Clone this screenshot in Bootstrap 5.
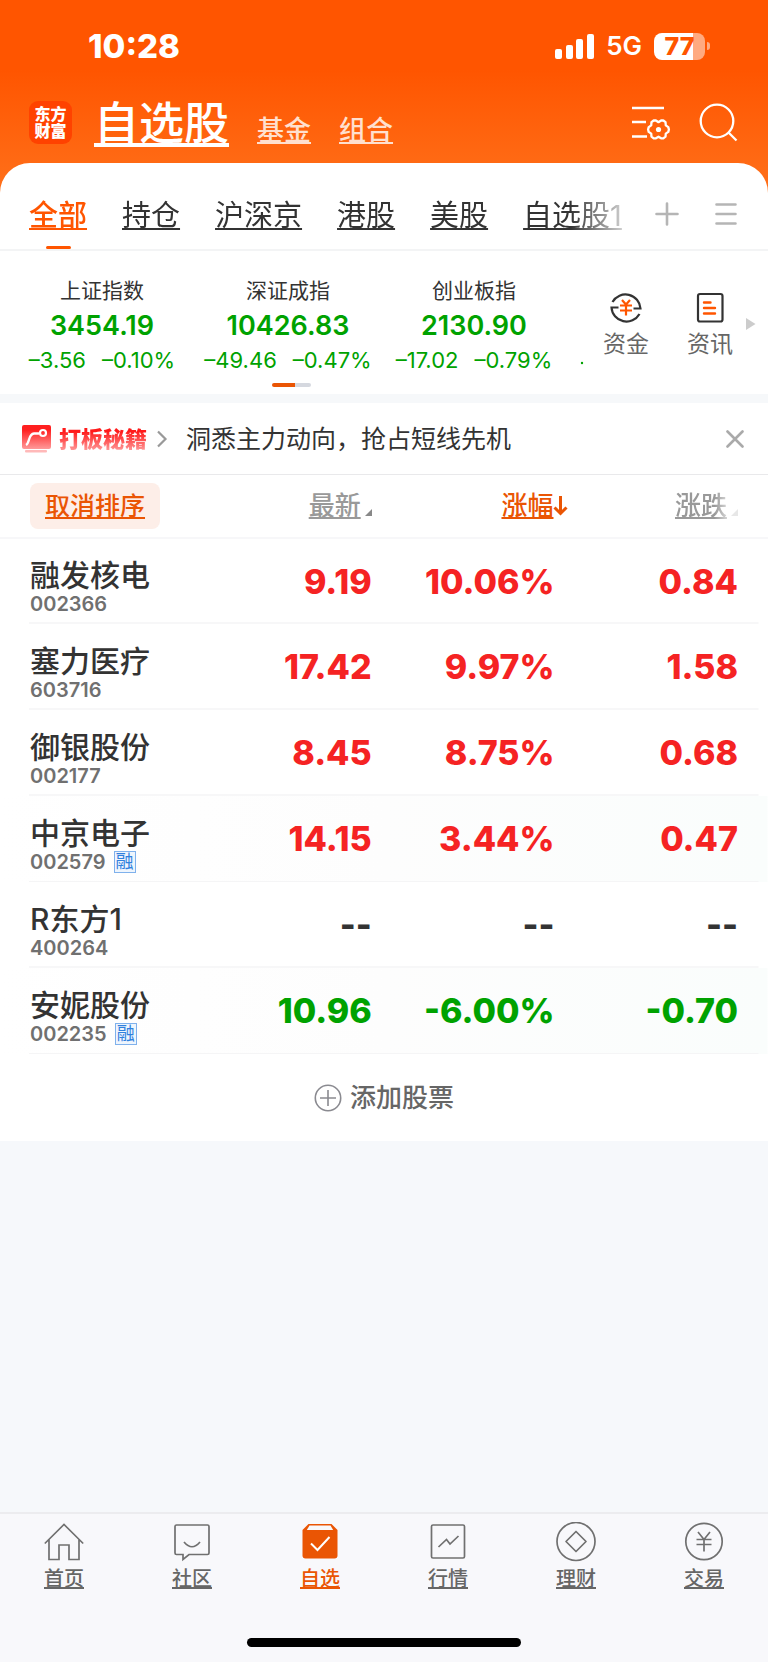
<!DOCTYPE html>
<html lang="zh-CN">
<head>
<meta charset="utf-8">
<meta name="viewport" content="width=device-width, initial-scale=1">
<title>自选股</title>
<link href="https://cdn.jsdelivr.net/npm/bootstrap@5.3.0/dist/css/bootstrap.min.css" rel="stylesheet">
<style>
:root { --brand:#ea5504; --hot:#ff5500; --up:#f52323; --down:#00a200; --ink:#333; --soft:#666; --mute:#999; --line:#f3f4f5; }
body { font-family:Inter,"Noto Sans CJK SC",sans-serif; color:var(--ink); background:#f6f8fb; }
a { color:inherit; }
svg { display:block; flex:none; }
.top-area { background:linear-gradient(#ff5500 0,#ff5500 70px,#ff721c 200px); color:#fff; }
.status-bar { height:90px; padding:2px 58px 0 88px; }
.clock { font-size:33px; line-height:40px; font-weight:800; }
.net { font-size:26px; line-height:32px; font-weight:600; }
.battery { width:51px; height:27px; border-radius:8px; background:linear-gradient(90deg,#fff 77%,#ffffff80 77%); color:var(--hot); font-size:25px; line-height:27px; font-weight:800; text-align:center; margin-left:12px; }
.battery-tip { width:3px; height:8px; border-radius:0 3px 3px 0; background:#ffffff80; margin-left:2px; }
.title-bar { height:73px; padding:0 30px 8px 29px; }
.app-logo { width:43px; height:43px; border-radius:9px; background:#ff4200; font-size:16px; line-height:17px; font-weight:900; text-align:center; padding-top:5px; }
.title-group { margin-left:22px; padding-top:2px; }
.page-title { font-size:45px; line-height:56px; font-weight:500; margin:0; }
.sub-title { font-size:27px; line-height:32px; font-weight:500; color:#ffe0cf; }
.sheet { background:#fff; border-radius:30px 30px 0 0; color:var(--ink); }
.tab-bar { height:88px; padding:0 31px 0 29px; border-bottom:2px solid var(--line); }
.tab-scroll { gap:35px; overflow:hidden; -webkit-mask-image:linear-gradient(90deg,#000 90%,#0003 99%); mask-image:linear-gradient(90deg,#000 90%,#0003 99%); }
.tab-scroll a { font-size:29px; line-height:36px; white-space:nowrap; padding:35px 0 15px; position:relative; }
.tab-scroll .current { color:var(--hot); font-weight:500; }
.tab-scroll .current::after { content:""; position:absolute; left:50%; bottom:0; width:25px; height:3px; margin-left:-12px; border-radius:2px; background:var(--hot); }
.plain { border:0; background:none; padding:0; color:inherit; }
.tab-bar .plain { padding-top:15px; }
.index-strip { height:143px; padding:24px 11px 0 9px; }
.index-cell { flex:0 0 186px; text-align:center; white-space:nowrap; }
.index-name { font-size:21px; line-height:32px; }
.index-value { font-size:27px; line-height:38px; font-weight:600; color:var(--down); }
.index-diff { font-size:22px; line-height:30px; color:var(--down); gap:16px; }
.pager { width:39px; height:4px; border-radius:2px; background:linear-gradient(90deg,var(--brand) 60%,#d5d8df 60%); left:272px; bottom:7px; }
.tool { font-size:23px; line-height:30px; color:var(--soft); }
.tool-gap { width:38px; }
.tool-more { margin-left:12px; }
.promo { height:72px; padding:0 24px 0 21px; border-bottom:1px solid #e9e9eb; }
.gap-band { height:9px; background:#f6f8fa; }
.promo-name { font-size:22px; line-height:30px; font-weight:900; background:linear-gradient(#ff1a1a 25%,#ff9c9c 90%); -webkit-background-clip:text; background-clip:text; color:transparent; }
.promo-text { font-size:25px; line-height:36px; margin-left:18px; }
.quotes { width:100%; table-layout:fixed; border-collapse:collapse; }
.quotes .c-name { width:24.6%; } .quotes .c-mid { width:23.8%; }
.quotes th, .quotes td { padding:0; text-align:right; font-weight:inherit; vertical-align:middle; }
.quotes th:first-child { text-align:left; padding-left:30px; }
.quotes th:last-child, .quotes td:last-child { padding-right:30px; }
.quotes thead th { height:63px; border-bottom:2px solid #f7f7f9; font-size:26px; line-height:36px; color:var(--mute); font-weight:500; white-space:nowrap; }
.quotes thead .sorted { color:var(--brand); }
.quotes thead .sorted .head-link { margin-right:-14px; }
.quotes thead .fading { -webkit-mask-image:linear-gradient(90deg,#000 75%,#0003 83%); mask-image:linear-gradient(90deg,#000 75%,#0003 83%); }
.reset-btn { border:0; border-radius:8px; background:#fdeee8; color:var(--brand); font-size:25px; line-height:32px; font-weight:500; text-decoration:underline; padding:7px 15px; }
.quotes tbody tr { height:86px; background:linear-gradient(#f7f7f8,#f7f7f8) 29px 100%/calc(100% - 38px) 2px no-repeat; }
.quotes tbody tr.tinted { background:linear-gradient(#f5f5f6,#f5f5f6) 29px 100%/calc(100% - 38px) 1px no-repeat,linear-gradient(90deg,#fff,#fdfdfd 50%,#fafdfc); }
.quotes tbody td { font-size:34px; line-height:44px; font-weight:800; }
.quotes tbody th { padding-top:9px; }
.stock { font-size:30px; line-height:36px; font-weight:500; white-space:nowrap; color:var(--ink); }
.code { font-size:20px; line-height:22px; font-weight:600; color:#707070; gap:8px; }
.flag { width:22px; height:22px; border:1px solid #7fb1ec; background:#eef5fd; color:#2f80dd; font-size:18px; line-height:20px; font-weight:400; text-align:center; }
.up { color:var(--up); } .down { color:var(--down); }
.add-row { height:87px; font-size:26px; line-height:36px; font-weight:500; color:var(--soft); }
.dock { background:#f8f8fb; border-top:2px solid #ececef; color:var(--soft); height:150px; }
.dock nav { padding-top:8px; }
.dock a { flex:1 1 0; font-size:20px; line-height:26px; font-weight:500; }
.dock .current { color:var(--brand); }
.home-bar { width:274px; height:9px; border-radius:5px; background:#000; margin:0 auto 15px; }
</style>
</head>
<body>
<div class="d-flex flex-column min-vh-100">
  <header class="top-area">
    <div class="status-bar d-flex align-items-center justify-content-between">
      <span class="clock">10:28</span>
      <div class="d-flex align-items-center">
        <svg width="39" height="25" viewBox="0 0 39 25" fill="#fff"><rect x="0" y="15" width="7" height="10" rx="2"/><rect x="11" y="11" width="7" height="14" rx="2"/><rect x="21" y="5" width="7" height="20" rx="2"/><rect x="32" y="0" width="7" height="25" rx="2"/></svg>
        <span class="net ms-2 ps-1">5G</span>
        <span class="battery">77</span>
        <span class="battery-tip"></span>
      </div>
    </div>
    <div class="title-bar d-flex align-items-center">
      <div class="app-logo">东方<br>财富</div>
      <div class="title-group d-flex align-items-baseline">
        <h1 class="page-title"><a href="#">自选股</a></h1>
        <a class="sub-title ms-4 ps-1" href="#">基金</a>
        <a class="sub-title ms-4 ps-1" href="#">组合</a>
      </div>
      <button class="plain ms-auto" aria-label="设置列表">
        <svg width="40" height="36" viewBox="0 0 40 36" fill="none" stroke="#fff" stroke-width="2.6"><path d="M1 3h32M1 17h14M1 31.500h15"/><path stroke-width="2.300" stroke-linejoin="round" d="M22.700 15.500h2.200l2.600 1.700 2.600-1.700h2.200l2.200 1.700.3 3.200 2.500 1.700.6 2.400-.6 2.400-2.500 1.700-.3 3-2.200 1.700h-2.200l-2.600-1.600-2.600 1.600h-2.200l-2.200-1.700-.3-3-2.500-1.700-.6-2.400.6-2.400 2.500-1.700.3-3.200z"/><circle cx="27.500" cy="24.500" r="2.600" fill="#fff" stroke="none"/></svg>
      </button>
      <button class="plain ms-4 ps-1" aria-label="搜索">
        <svg width="39" height="39" viewBox="0 0 39 39" fill="none" stroke="#fff" stroke-width="2.300"><circle cx="18" cy="18" r="16.300"/><path d="M29.500 29.500l8 8"/></svg>
      </button>
    </div>
    <div class="sheet">
      <div class="tab-bar d-flex align-items-center">
        <nav class="tab-scroll d-flex flex-fill">
          <a class="current" href="#">全部</a><a href="#">持仓</a><a href="#">沪深京</a><a href="#">港股</a><a href="#">美股</a><a href="#">自选股1</a>
        </nav>
        <button class="plain ms-4" aria-label="添加分组"><svg width="24" height="24" viewBox="0 0 24 24" stroke="#b5b5b5" stroke-width="2.600" stroke-linecap="round"><path d="M12 1.500v21M1.500 12h21"/></svg></button>
        <button class="plain ms-4 ps-2" aria-label="分组列表"><svg class="ms-1" width="22" height="24" viewBox="0 0 22 24" stroke="#b5b5b5" stroke-width="2.600" stroke-linecap="round"><path d="M1.500 2.500h19M1.500 12h19M1.500 21.500h19"/></svg></button>
      </div>
    </div>
  </header>

  <main class="bg-white">
    <section class="index-strip d-flex position-relative">
      <div class="index-cell"><div class="index-name">上证指数</div><div class="index-value">3454.19</div><div class="index-diff d-flex justify-content-center"><span>–3.56</span><span>–0.10%</span></div></div>
      <div class="index-cell"><div class="index-name">深证成指</div><div class="index-value">10426.83</div><div class="index-diff d-flex justify-content-center"><span>–49.46</span><span>–0.47%</span></div></div>
      <div class="index-cell"><div class="index-name">创业板指</div><div class="index-value">2130.90</div><div class="index-diff d-flex justify-content-center"><span>–17.02</span><span>–0.79%</span></div></div>
      <svg class="mt-auto mb-4" width="20" height="14" viewBox="0 0 20 14"><circle cx="15" cy="7" r="1.200" fill="#00a200"/></svg>
      <div class="d-flex flex-fill align-items-start justify-content-end pt-3">
        <a class="tool d-flex flex-column align-items-center text-decoration-none" href="#">
          <svg width="34" height="34" viewBox="0 0 34 34" fill="none" stroke="#333" stroke-width="2.200"><path d="M3.500 11A15 15 0 0 1 31.500 17.500h-7M30.500 23A15 15 0 0 1 2.500 16.500h7"/><path stroke="#ff5500" d="M13 9l4 4.500L21 9M11 14.500h12M11 19.500h12M17 14v10.500"/></svg>
          <span class="mt-1">资金</span></a>
        <span class="tool-gap"></span>
        <a class="tool d-flex flex-column align-items-center text-decoration-none" href="#">
          <svg width="34" height="34" viewBox="0 0 34 34" fill="none" stroke="#333" stroke-width="2.200"><rect x="5" y="3" width="24.500" height="27.500" rx="2"/><path stroke="#ff5500" stroke-width="2.400" stroke-linecap="round" d="M11 11.500h6.500M11 17h11M11 22.500h11"/></svg>
          <span class="mt-1">资讯</span></a>
        <svg class="tool-more mt-4" width="12" height="18" viewBox="0 0 12 18"><path fill="#ccc" d="M1 3l9.500 6L1 15z"/></svg>
      </div>
      <div class="pager position-absolute"></div>
    </section>
    <div class="gap-band"></div>
    <section class="promo d-flex align-items-center">
      <svg width="30" height="28" viewBox="0 0 30 28"><defs><linearGradient id="pg" x2="0" y2="1"><stop offset=".2" stop-color="#ff1f1f"/><stop offset="1" stop-color="#ff9a9a"/></linearGradient></defs><rect x="1" y="0" width="29" height="24" rx="2" fill="url(#pg)"/><path d="M5 20C9 18 7 9 13 8.500h5" fill="none" stroke="#fff" stroke-width="2.400"/><circle cx="22" cy="8" r="3" fill="none" stroke="#fff" stroke-width="2.200"/><rect x="4" y="25" width="22" height="2.500" rx="1" fill="#ffb9b9"/></svg>
      <span class="promo-name ms-2">打板秘籍</span>
      <svg class="ms-2" width="13" height="18" viewBox="0 0 13 18" fill="none" stroke="#999" stroke-width="2.200"><path d="M3 1.500L10.500 9 3 16.500"/></svg>
      <span class="promo-text">洞悉主力动向，抢占短线先机</span>
      <button class="plain ms-auto" aria-label="关闭"><svg width="18" height="18" viewBox="0 0 18 18" stroke="#aaa" stroke-width="2.600" stroke-linecap="round"><path d="M1.500 1.500l15 15M16.500 1.500l-15 15"/></svg></button>
    </section>

    <table class="quotes">
      <colgroup><col class="c-name"><col class="c-mid"><col class="c-mid"><col></colgroup>
      <thead>
        <tr>
          <th scope="col"><button class="reset-btn">取消排序</button></th>
          <th scope="col"><span class="head-link d-inline-flex align-items-end"><a href="#">最新</a><svg class="ms-1 mb-2" width="7" height="7" viewBox="0 0 7 7"><path fill="#888" d="M7 0v7H0z"/></svg></span></th>
          <th scope="col" class="sorted"><span class="head-link d-inline-flex align-items-center"><a href="#">涨幅</a><svg width="15" height="22" viewBox="0 0 15 22" fill="none" stroke="#ea5504" stroke-width="3"><path d="M7.500 1v17M1.500 12.500l6 6 6-6"/></svg></span></th>
          <th scope="col" class="fading"><span class="head-link d-inline-flex align-items-end"><a href="#">涨跌</a><svg class="ms-1 mb-2" width="7" height="7" viewBox="0 0 7 7"><path fill="#888" d="M7 0v7H0z"/></svg></span></th>
        </tr>
      </thead>
      <tbody>
        <tr class="up"><th scope="row"><div class="stock">融发核电</div><div class="code">002366</div></th><td>9.19</td><td>10.06%</td><td>0.84</td></tr>
        <tr class="up"><th scope="row"><div class="stock">塞力医疗</div><div class="code">603716</div></th><td>17.42</td><td>9.97%</td><td>1.58</td></tr>
        <tr class="up"><th scope="row"><div class="stock">御银股份</div><div class="code">002177</div></th><td>8.45</td><td>8.75%</td><td>0.68</td></tr>
        <tr class="up tinted"><th scope="row"><div class="stock">中京电子</div><div class="code d-flex align-items-center">002579<span class="flag">融</span></div></th><td>14.15</td><td>3.44%</td><td>0.47</td></tr>
        <tr><th scope="row"><div class="stock">R东方1</div><div class="code">400264</div></th><td>--</td><td>--</td><td>--</td></tr>
        <tr class="down tinted"><th scope="row"><div class="stock">安妮股份</div><div class="code d-flex align-items-center">002235<span class="flag">融</span></div></th><td>10.96</td><td>-6.00%</td><td>-0.70</td></tr>
      </tbody>
    </table>
    <button class="plain add-row w-100 d-flex align-items-center justify-content-center gap-2">
      <svg width="28" height="28" viewBox="0 0 28 28" fill="none" stroke="#8a8a90" stroke-width="1.600"><circle cx="14" cy="14" r="12.700"/><path d="M14 6v16M6 14h16"/></svg>
      添加股票
    </button>
  </main>

  <footer class="dock mt-auto d-flex flex-column justify-content-between">
    <nav class="d-flex text-center">
      <a href="#"><svg class="mx-auto mb-1" width="40" height="40" viewBox="0 0 40 40" fill="none" stroke="#707070" stroke-width="1.700"><path d="M.8 21.500L20 2.500l19.200 19M5 17.500v20h10V23h10v14.500h10v-20"/></svg>首页</a>
      <a href="#"><svg class="mx-auto mb-1" width="40" height="40" viewBox="0 0 40 40" fill="none" stroke="#707070" stroke-width="1.700"><path d="M4.500 3h31q1.500 0 1.500 1.500v26.500q0 1.500-1.500 1.500H17l-6 5v-5H4.500Q3 32.500 3 31V4.500Q3 3 4.500 3z"/><path d="M12 20q8 9.500 16 0"/></svg>社区</a>
      <a class="current" href="#"><svg class="mx-auto mb-1" width="40" height="40" viewBox="0 0 40 40"><path fill="#ea5504" d="M8.500 2h23l6 6v25.500q0 3-3 3h-29q-3 0-3-3V8z"/><path fill="#f8f8fb" d="M9.500 3.600h21l2.700 4.400H6.800z"/><path fill="none" stroke="#fff" stroke-width="2" d="M11 21.500l6.500 6.500 12-13"/></svg>自选</a>
      <a href="#"><svg class="mx-auto mb-1" width="40" height="40" viewBox="0 0 40 40" fill="none" stroke="#707070" stroke-width="1.700"><rect x="3.500" y="3" width="33" height="33" rx="1.500"/><path d="M10.500 25l8-7.500 3.500 4.500 8.500-8"/></svg>行情</a>
      <a href="#"><svg class="mx-auto mb-1" width="40" height="40" viewBox="0 0 40 40" fill="none" stroke="#707070" stroke-width="1.700"><circle cx="20" cy="19.500" r="19"/><path stroke-linejoin="round" d="M20 9.500l10 10-10 10-10-10z"/></svg>理财</a>
      <a href="#"><svg class="mx-auto mb-1" width="40" height="40" viewBox="0 0 40 40" fill="none" stroke="#707070" stroke-width="1.700"><circle cx="20" cy="19.500" r="18.200"/><path d="M14 10l6 7.500 6-7.500M12.500 17.500h15M12.500 22.500h15M20 17.500v12"/></svg>交易</a>
    </nav>
    <div class="home-bar"></div>
  </footer>
</div>
<script src="https://cdn.jsdelivr.net/npm/bootstrap@5.3.0/dist/js/bootstrap.bundle.min.js"></script>
</body>
</html>
